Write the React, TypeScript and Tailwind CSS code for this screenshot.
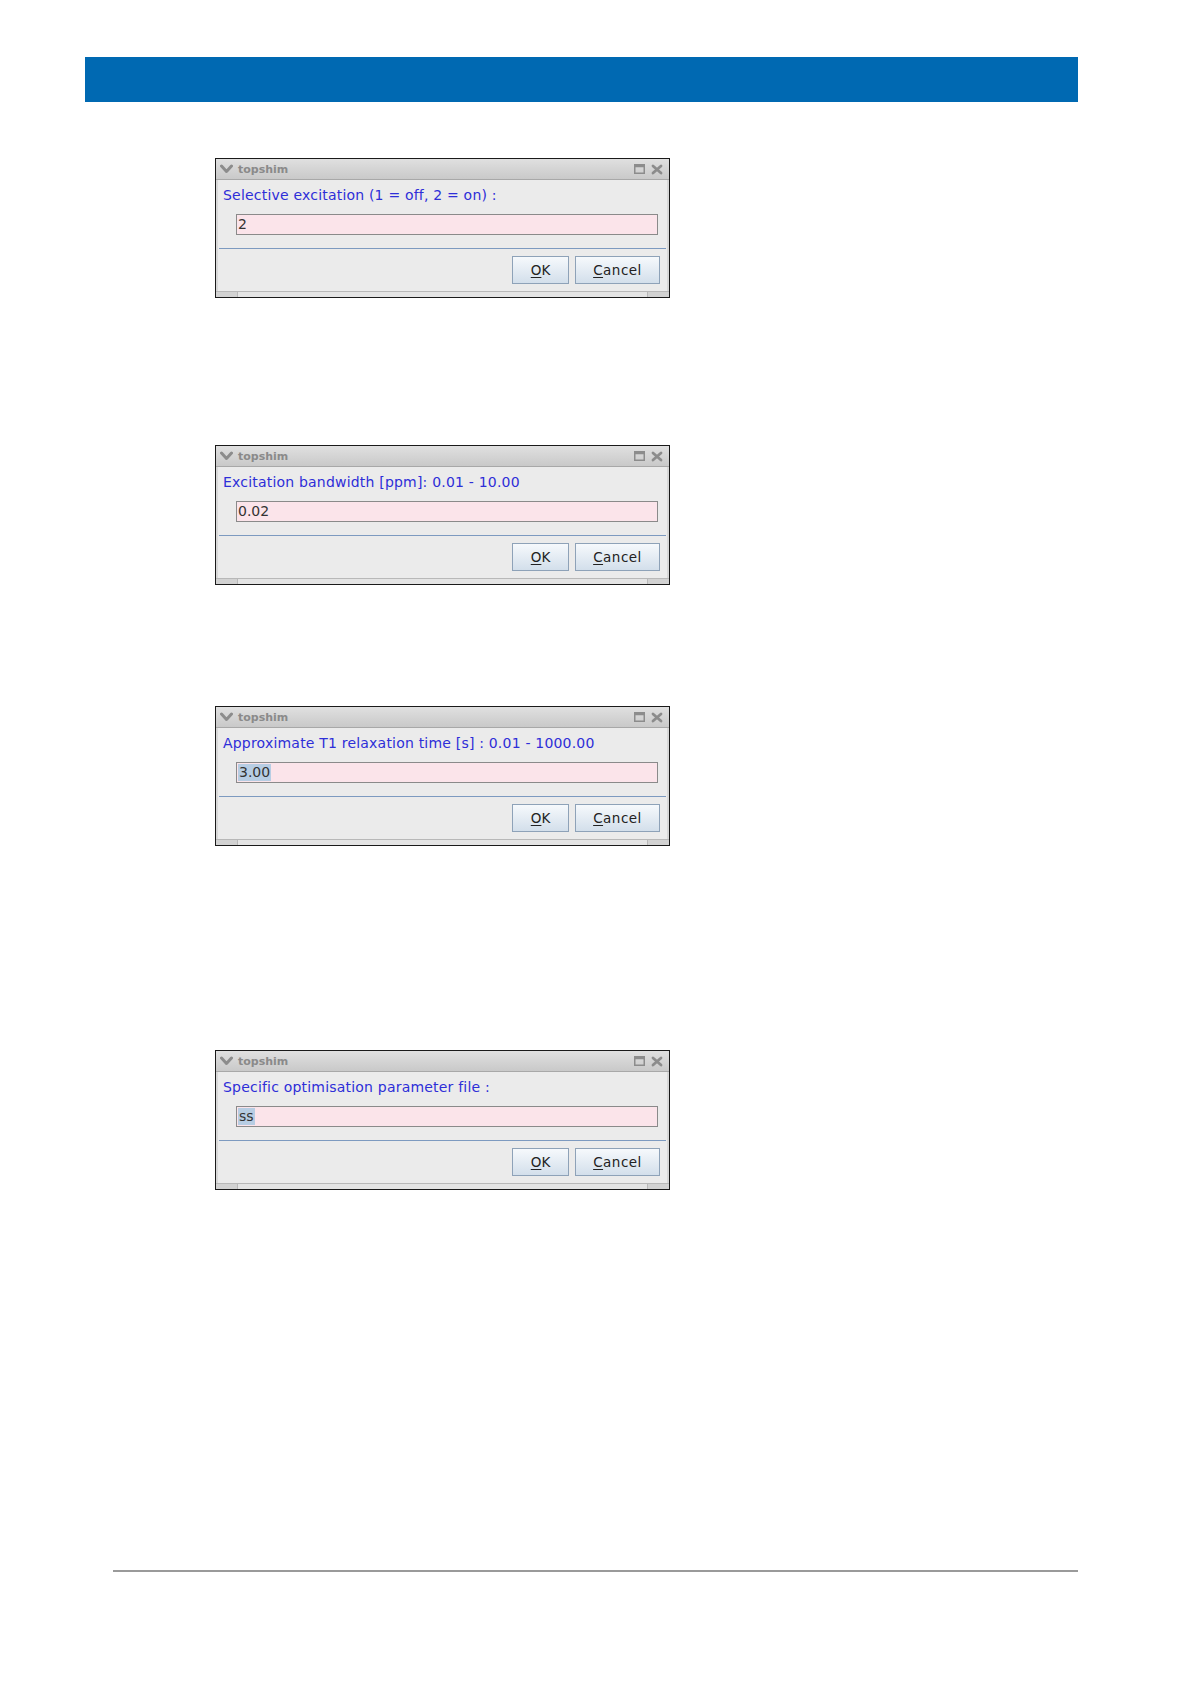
import React from "react";

type DialogProps = {
  label: string;
  value: string;
  selected?: boolean;
  className?: string;
};

function Chevron() {
  return (
    <svg width="13" height="10" viewBox="0 0 13 10" className="shrink-0">
      <path d="M1.5 2 L6.5 7.5 L11.5 2" fill="none" stroke="#8c8c8c" strokeWidth="3" strokeLinejoin="round" strokeLinecap="round" />
    </svg>
  );
}

function MaxIcon() {
  return (
    <svg width="11" height="10" viewBox="0 0 11 10">
      <rect x="0.75" y="0.75" width="9.5" height="8.5" fill="none" stroke="#8c8c8c" strokeWidth="1.5" />
      <rect x="0.75" y="0.75" width="9.5" height="2.5" fill="#8c8c8c" />
    </svg>
  );
}

function CloseIcon() {
  return (
    <svg width="12" height="11" viewBox="0 0 12 11">
      <path d="M2 2 L10 9 M10 2 L2 9" stroke="#8c8c8c" strokeWidth="2.8" strokeLinecap="round" />
    </svg>
  );
}

function Dialog({ label, value, selected, className }: DialogProps) {
  return (
    <div className={"w-[455px] h-[140px] border border-[#1a1a1a] bg-[#ebebeb] flex flex-col " + (className ?? "")}>
      {/* title bar */}
      <div className="h-[21px] shrink-0 flex items-center pl-[4px] pr-[3px] gap-[5px] bg-gradient-to-b from-[#e0e0e0] to-[#c9c9c9] border-b border-[#a8a8a8]">
        <Chevron />
        <span className="text-[11px] font-bold text-[#8a8a8a] font-['DejaVu_Sans',sans-serif] leading-none">topshim</span>
        <div className="ml-auto flex items-center gap-[6px] pr-[3px]">
          <MaxIcon />
          <CloseIcon />
        </div>
      </div>

      {/* body */}
      <div className="flex-1 flex flex-col border-x-[2px] border-[#d8d8d8]">
        <div className="pt-[6px] pl-[5px] h-[34px] text-[14px] leading-[18px] text-[#2e2ed8] font-['DejaVu_Sans',sans-serif] tracking-[0.2px] whitespace-pre">
          {label}
        </div>
        <div className="ml-[18px] mr-[9px] h-[21px] border border-[#8a8a8a] bg-[#fbe4ea] flex items-center pl-[1px] text-[14px] text-[#333] font-['DejaVu_Sans',sans-serif]">
          {selected ? <span className="bg-[#b7cde3] px-[1px] leading-[17px]">{value}</span> : <span className="leading-[17px]">{value}</span>}
        </div>
        <div className="mt-[13px] mx-[1px] h-px bg-[#7d9ac0]" />
        <div className="mt-[7px] flex justify-end gap-[6px] pr-[7px]">
          <button className="w-[57px] h-[28px] border border-[#8ea2b8] bg-gradient-to-b from-[#f6f9fc] to-[#d3dfeb] text-[13.5px] text-[#222] font-['DejaVu_Sans',sans-serif]">
            <span className="underline underline-offset-2">O</span>K
          </button>
          <button className="w-[85px] h-[28px] border border-[#8ea2b8] bg-gradient-to-b from-[#f6f9fc] to-[#d3dfeb] text-[13.5px] text-[#222] font-['DejaVu_Sans',sans-serif] tracking-[0.5px]">
            <span className="underline underline-offset-2">C</span>ancel
          </button>
        </div>
      </div>

      {/* bottom resize frame */}
      <div className="h-[6px] shrink-0 bg-[#e4e4e4] border-t border-[#b8b8b8] flex justify-between">
        <div className="w-[22px] border-r border-[#b8b8b8] bg-[#d2d2d2]" />
        <div className="w-[22px] border-l border-[#b8b8b8] bg-[#d2d2d2]" />
      </div>
    </div>
  );
}

export default function App() {
  return (
    <div className="w-[1191px] h-[1684px] bg-white flex flex-col">
      <div className="mt-[57px] ml-[85px] w-[993px] h-[45px] bg-[#0069b2]" />

      <div className="ml-[215px] flex flex-col">
        <Dialog className="mt-[56px]" label="Selective excitation (1 = off, 2 = on) :" value="2" />
        <Dialog className="mt-[147px]" label="Excitation bandwidth [ppm]: 0.01 - 10.00" value="0.02" />
        <Dialog className="mt-[121px]" label="Approximate T1 relaxation time [s] : 0.01 - 1000.00" value="3.00" selected />
        <Dialog className="mt-[204px]" label="Specific optimisation parameter file :" value="ss" selected />
      </div>

      <div className="mt-[380px] ml-[113px] w-[965px] h-[2px] bg-[#9a9a9a]" />
    </div>
  );
}
